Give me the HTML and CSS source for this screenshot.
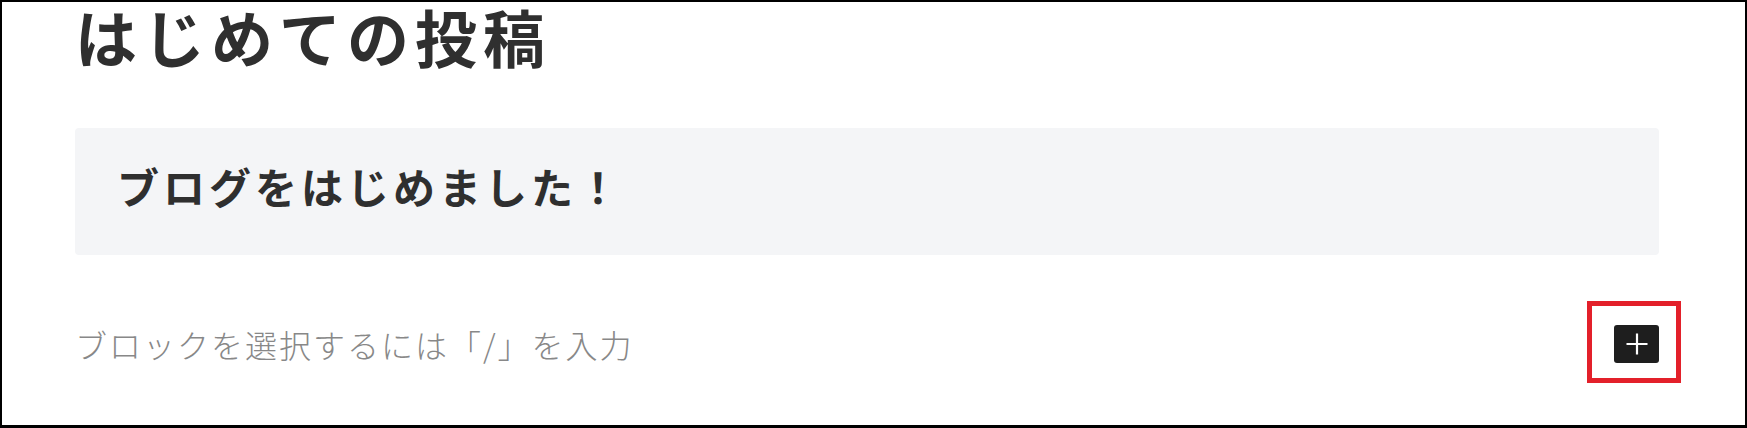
FILE: index.html
```html
<!DOCTYPE html>
<html lang="ja">
<head>
<meta charset="utf-8">
<title>はじめての投稿</title>
<link rel="stylesheet" href="styles.css">
</head>
<body>
<div class="frame">
  <div class="editor">
    <h1 class="post-title">はじめての投稿</h1>
    <div class="group">
      <h2 class="group-heading">ブログをはじめました！</h2>
    </div>
    <div class="appender">
      <p class="placeholder">ブロックを選択するには「/」を入力</p>
      <div class="add-wrap">
        <button class="add-btn" type="button" aria-label="ブロックを追加">
          <svg width="24" height="24" viewBox="0 0 24 24" aria-hidden="true">
            <path d="M12 1.5v21M1.5 12h21" stroke="#ffffff" stroke-width="2.2" fill="none"/>
          </svg>
        </button>
        <span class="highlight"></span>
      </div>
    </div>
  </div>
</div>
</body>
</html>
```
FILE: styles.css
```css
html, body {
  margin: 0;
  padding: 0;
  background: #ffffff;
}

.frame {
  width: 1747px;
  height: 428px;
  box-sizing: border-box;
  border: 2px solid #000000;
  border-bottom-width: 3px;
  font-family: "Noto Sans CJK JP", "Noto Sans", sans-serif;
  color: #2f2f2f;
}

.editor {
  padding: 0 86px 0 73px;
}

.post-title {
  margin: 0;
  font-size: 62px;
  line-height: 68px;
  font-weight: 700;
  letter-spacing: 6px;
  color: #2f2f2f;
}

.group {
  margin-top: 58px;
  background: #f4f5f7;
  border-radius: 4px;
  height: 127px;
  box-sizing: border-box;
  padding: 34px 42px 0 42px;
}

.group-heading {
  margin: 0;
  font-size: 42px;
  line-height: 48px;
  font-weight: 700;
  letter-spacing: 4px;
  color: #2f2f2f;
}

.appender {
  margin-top: 69px;
  display: flex;
  align-items: center;
  justify-content: space-between;
}

.placeholder {
  margin: 0;
  font-size: 32px;
  line-height: 38px;
  font-weight: 300;
  letter-spacing: 2px;
  color: #888888;
  padding-top: 1px;
}

.add-wrap {
  position: relative;
  display: flex;
}

.add-btn {
  width: 45px;
  height: 38px;
  border: 0;
  padding: 0;
  border-radius: 3px;
  background: #1e1e1e;
  display: flex;
  align-items: center;
  justify-content: center;
}

.highlight {
  position: absolute;
  left: -27px;
  right: -22px;
  top: -24px;
  bottom: -20px;
  border: 5px solid #e3202a;
  pointer-events: none;
}
```
